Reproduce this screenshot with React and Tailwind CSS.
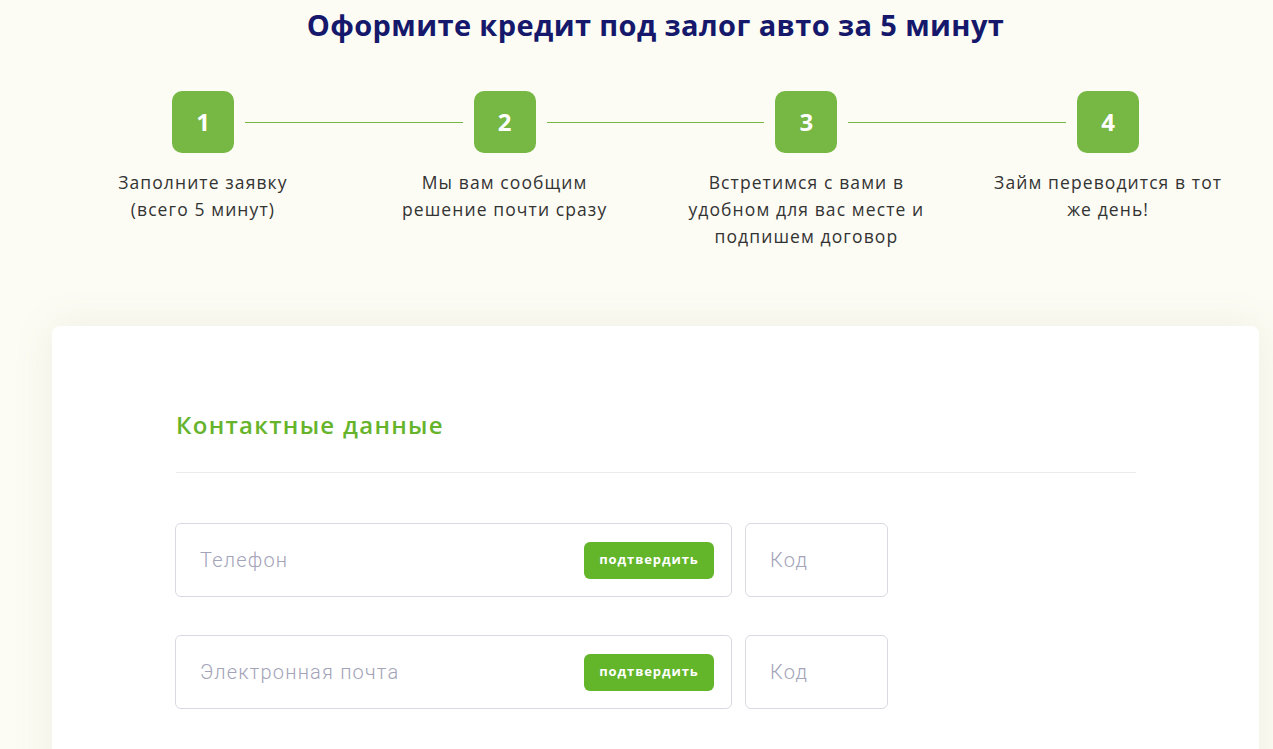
import React from "react";

const steps = [
  { n: "1", text: ["Заполните заявку", "(всего 5 минут)"] },
  { n: "2", text: ["Мы вам сообщим", "решение почти сразу"] },
  { n: "3", text: ["Встретимся с вами в", "удобном для вас месте и", "подпишем договор"] },
  { n: "4", text: ["Займ переводится в тот", "же день!"] },
];

const Field = ({ placeholder }) => (
  <div className="flex gap-[13px]">
    <div className="flex h-[74px] w-[557px] items-center justify-between rounded-md border border-[#d9d9e2] pl-[24px] pr-[17px]">
      <input
        placeholder={placeholder}
        className="w-[340px] bg-transparent text-[20px] font-light tracking-[1.2px] text-[#333] outline-none placeholder:text-[#a3a3b9] [font-family:Roboto,sans-serif]"
      />
      <button className="h-[37px] w-[130px] rounded-md bg-[#63b52a] text-[13px] font-bold tracking-[0.9px] text-white [font-family:'Open_Sans',sans-serif]">
        подтвердить
      </button>
    </div>
    <div className="flex h-[74px] w-[143px] items-center rounded-md border border-[#d9d9e2] pl-[24px]">
      <input
        placeholder="Код"
        className="w-[100px] bg-transparent text-[20px] font-light tracking-[1.2px] text-[#333] outline-none placeholder:text-[#a3a3b9] [font-family:Roboto,sans-serif]"
      />
    </div>
  </div>
);

export default function App() {
  return (
    <div className="min-h-screen overflow-hidden bg-[#fcfcf4] [font-family:'Open_Sans',sans-serif]">
      <div className="ml-[52px] w-[1207px]">
        {/* Title */}
        <h1 className="pt-[6px] text-center text-[29px] font-bold leading-[38px] tracking-[0.4px] text-[#15186b]">
          Оформите кредит под залог авто за 5 минут
        </h1>

        {/* Steps */}
        <div className="mt-[47px] flex items-center px-[120px]">
          {steps.map((s, i) => (
            <React.Fragment key={s.n}>
              <div className="flex h-[62px] w-[62px] items-center justify-center rounded-[10px] bg-[#77b743] text-[24px] font-bold text-white">
                {s.n}
              </div>
              {i < steps.length - 1 && <div className="mx-[11px] h-px flex-1 bg-[#77b743]" />}
            </React.Fragment>
          ))}
        </div>
        <div className="mt-[16px] grid grid-cols-4">
          {steps.map((s) => (
            <p key={s.n} className="text-center text-[17.5px] leading-[27px] tracking-[1.1px] text-[#333]">
              {s.text.map((t, j) => (
                <span key={j} className="block">
                  {t}
                </span>
              ))}
            </p>
          ))}
        </div>

        {/* Form card */}
        <div className="mt-[76px] h-[500px] rounded-lg bg-white px-[123px] pt-[84px] shadow-[0_0_40px_rgba(120,120,80,0.1)]">
          <h2 className="pl-px text-[24px] font-semibold leading-[30px] tracking-[1.3px] text-[#66b42c]">
            Контактные данные
          </h2>
          <div className="mt-[32px] ml-px h-px bg-[#ececec]" />
          <div className="mt-[50px] flex flex-col gap-[38px]">
            <Field placeholder="Телефон" />
            <Field placeholder="Электронная почта" />
          </div>
        </div>
      </div>
    </div>
  );
}
